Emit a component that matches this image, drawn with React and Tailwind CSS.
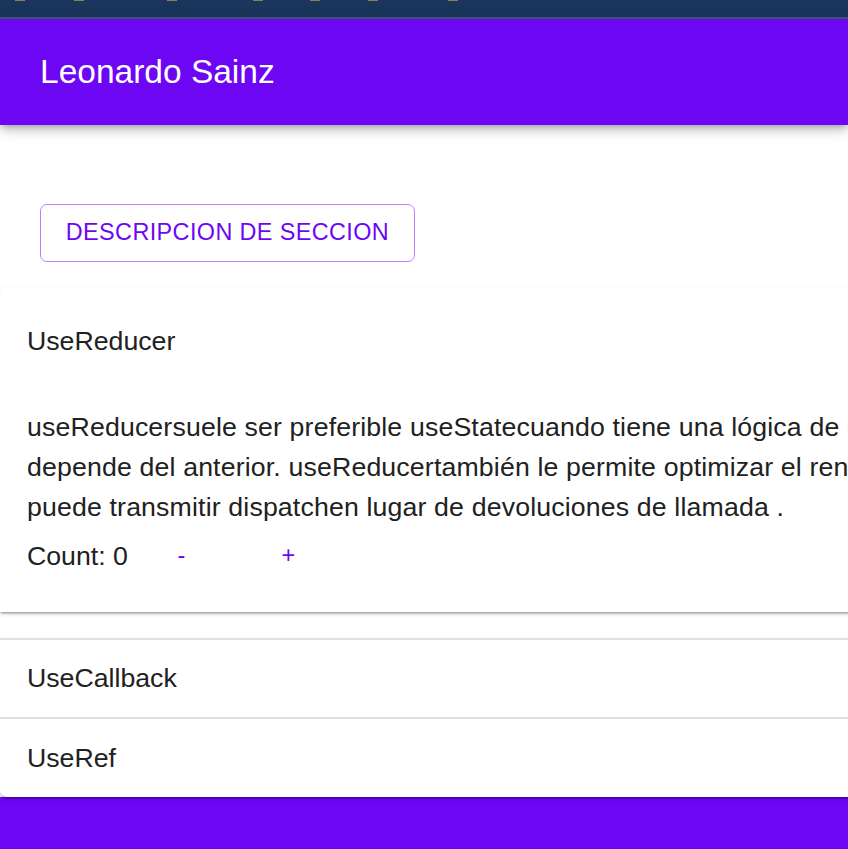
import { useState } from 'react';

const marks = ['ml-[15px]', 'ml-[49px]', 'ml-[83px]', 'ml-[76px]', 'ml-[47px]', 'ml-[48px]', 'ml-[70px]'];

export default function App() {
  const [count, setCount] = useState(0);

  return (
    <div className="w-full min-h-screen bg-white overflow-hidden font-['Liberation_Sans',Arial,sans-serif] text-[#212121]">
      {/* Browser strip */}
      <div className="h-[17px] bg-[#1b365c] flex items-start">
        {marks.map((m, i) => (
          <div key={i} className={`${m} w-[10px] h-px bg-[#8a7f4e]`} />
        ))}
      </div>
      <div className="h-[2px] bg-[#3d5a78]" />

      {/* App bar */}
      <header className="relative z-10 h-[106px] bg-[#6d06f3] flex items-center px-[40px] shadow-[0_3px_6px_-2px_rgba(0,0,0,0.25),0_6px_10px_0_rgba(0,0,0,0.14),0_2px_18px_0_rgba(0,0,0,0.1)]">
        <h1 className="text-white text-[33.5px] leading-[1.6]">Leonardo Sainz</h1>
      </header>

      {/* Content */}
      <main className="pt-[79px]">
        <div className="px-[40px]">
          <button className="w-[375px] h-[58px] border border-[#b782f9] rounded-[7px] text-[#6d06f3] text-[23.4px] tracking-[0.4px] uppercase">
            Descripcion de seccion
          </button>
        </div>

        <div className="mt-[25px] w-[1100px]">
          {/* Expanded accordion */}
          <section className="bg-white rounded-t-[7px] shadow-[0_3px_2px_-2px_rgba(0,0,0,0.2),0_2px_2px_0_rgba(0,0,0,0.14),0_2px_5px_0_rgba(0,0,0,0.12)]">
            <div className="h-[107px] flex items-center px-[27px] pt-px text-[26.7px]">UseReducer</div>
            <div className="pt-[13px] px-[27px] pb-[27px]">
              <p className="text-[26.7px] leading-[40px] whitespace-nowrap tracking-[0.15px]">
                useReducersuele ser preferible useStatecuando tiene una lógica de estado compleja que involucra múltiples subvalores o cuando el siguiente estado
                <br />
                depende del anterior. useReducertambién le permite optimizar el rendimiento para componentes que activan actualizaciones profundas porque
                <br />
                puede transmitir dispatchen lugar de devoluciones de llamada .
              </p>
              <div className="h-[58px] flex items-center">
                <span className="text-[26.7px]">Count: {count}</span>
                <button
                  onClick={() => setCount(count - 1)}
                  className="w-[107px] h-[58px] text-[#6d06f3] text-[23.4px]"
                >
                  -
                </button>
                <button
                  onClick={() => setCount(count + 1)}
                  className="w-[107px] h-[58px] text-[#6d06f3] text-[23.4px]"
                >
                  +
                </button>
              </div>
            </div>
          </section>

          {/* Collapsed accordions */}
          <div className="mt-[26px] bg-white rounded-b-[7px] relative z-10 shadow-[0_3px_2px_-2px_rgba(0,0,0,0.2),0_2px_2px_0_rgba(0,0,0,0.14),0_2px_5px_0_rgba(0,0,0,0.12)]">
            <div className="h-[2px] bg-[#e0e0e0]" />
            <div className="h-[77px] flex items-center px-[27px] text-[26.7px]">UseCallback</div>
            <div className="h-[2px] bg-[#e0e0e0]" />
            <div className="h-[78px] flex items-center px-[27px] text-[26.7px]">UseRef</div>
          </div>
        </div>

        {/* Footer */}
        <footer className="h-[70px] bg-[#6d06f3]" />
      </main>
    </div>
  );
}
